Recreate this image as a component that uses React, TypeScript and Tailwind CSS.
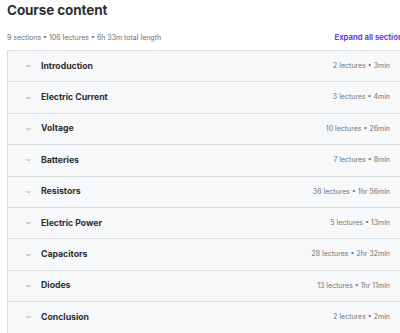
const sections = [
  { title: "Introduction", meta: "2 lectures • 3min" },
  { title: "Electric Current", meta: "3 lectures • 4min" },
  { title: "Voltage", meta: "10 lectures • 26min" },
  { title: "Batteries", meta: "7 lectures • 8min" },
  { title: "Resistors", meta: "36 lectures • 1hr 56min" },
  { title: "Electric Power", meta: "5 lectures • 13min" },
  { title: "Capacitors", meta: "28 lectures • 2hr 32min" },
  { title: "Diodes", meta: "13 lectures • 1hr 11min" },
  { title: "Conclusion", meta: "2 lectures • 2min" },
];

function Chevron() {
  return (
    <svg width="5" height="4" viewBox="0 0 5 4" fill="none" stroke="#8a8f93" strokeWidth="0.8">
      <path d="M0.5 1 2.5 3 4.5 1" />
    </svg>
  );
}

export default function App() {
  return (
    <div
      className="w-[400px] h-[333px] overflow-hidden bg-white pl-[7px] text-[#2d2f31]"
      style={{ fontFamily: "Inter, 'Noto Sans', sans-serif" }}
    >
      <div className="w-[400px]">
        {/* Heading */}
        <h2 className="text-[13.5px] font-bold leading-[20px] tracking-[-0.1px]">Course content</h2>

        {/* Summary row */}
        <div className="mt-[12px] mb-[6px] flex h-[12px] items-center justify-between">
          <span className="text-[7px] text-[#6a6f73]">9 sections • 106 lectures • 6h 33m total length</span>
          <span className="whitespace-nowrap text-[7.7px] font-bold text-[#6a3fd2]">Expand all sections</span>
        </div>

        {/* Section list */}
        <div className="border-l border-t border-[#dcdfe2]">
          {sections.map((s) => (
            <div
              key={s.title}
              className="flex h-[31.4px] items-center border-b border-[#dcdfe2] bg-[#f7f8fa] pl-[18px] pr-[17px]"
            >
              <Chevron />
              <span className="ml-[10px] text-[8.7px] font-bold">{s.title}</span>
              <span className="ml-auto text-[7px] text-[#707478]">{s.meta}</span>
            </div>
          ))}
        </div>
      </div>
    </div>
  );
}
